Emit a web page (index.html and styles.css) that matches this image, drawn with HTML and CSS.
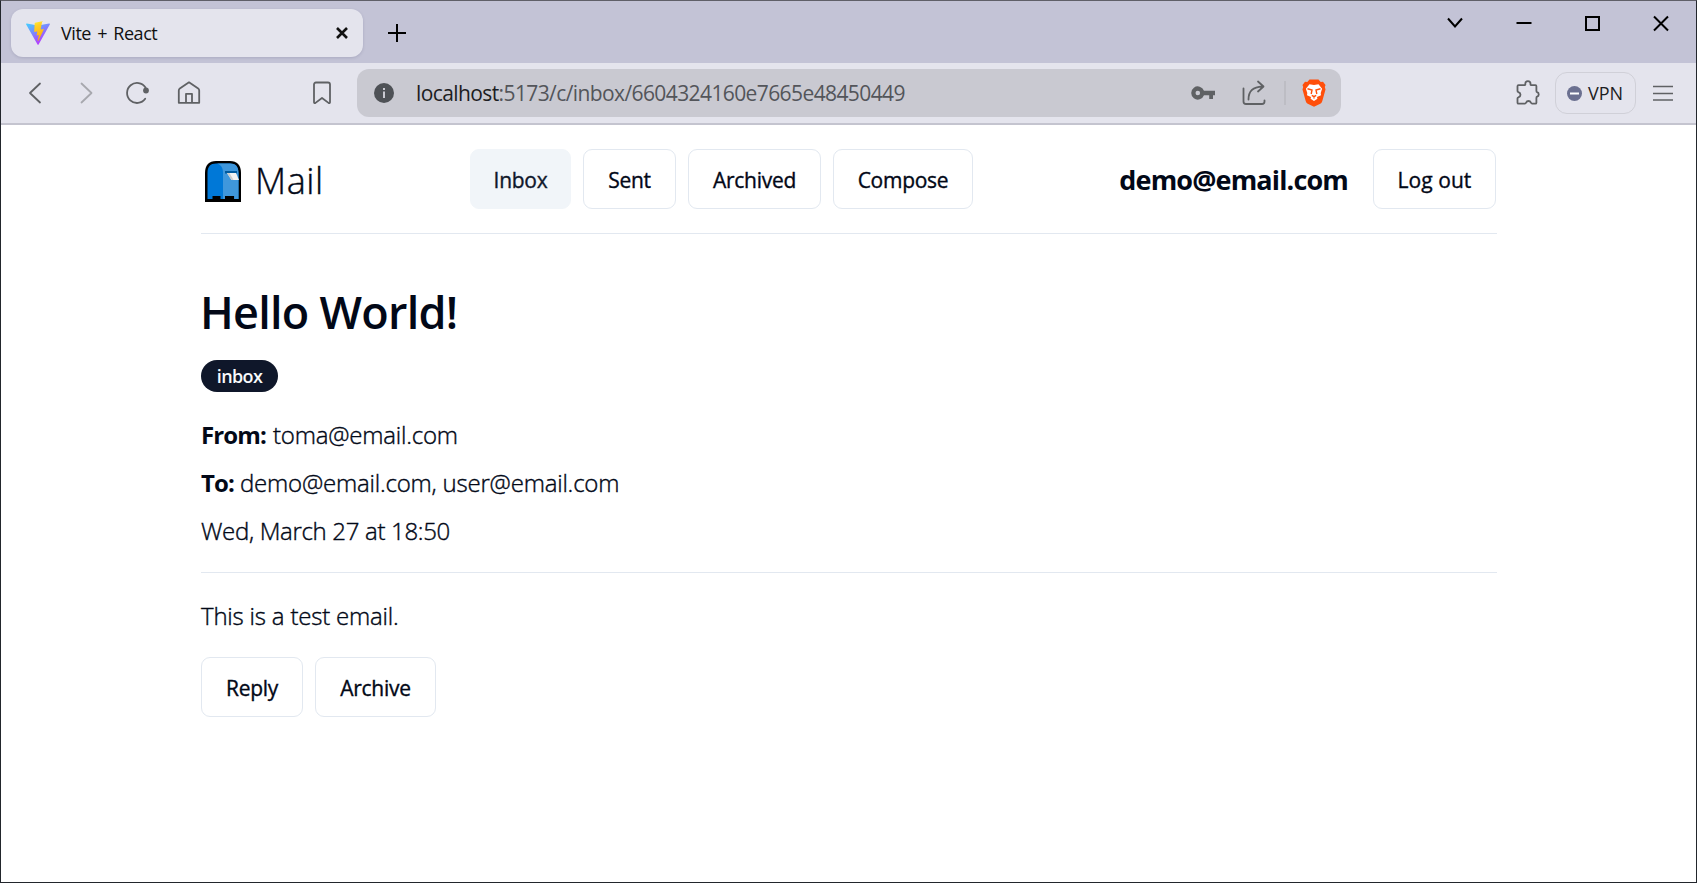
FILE: index.html
```
<!DOCTYPE html>
<html lang="en">
<head>
<meta charset="utf-8">
<title>Vite + React</title>
<link rel="stylesheet" href="styles.css">
</head>
<body>
<div class="window">
  <div class="tabstrip">
    <div class="tab">
      <svg class="favicon" width="24" height="24" viewBox="0 0 24 24">
        <defs>
          <linearGradient id="va" x1="0" y1="0" x2="0.6" y2="1"><stop offset="0" stop-color="#41d1ff"/><stop offset="1" stop-color="#bd34fe"/></linearGradient>
          <linearGradient id="vb" x1="0.4" y1="0" x2="0.6" y2="1"><stop offset="0" stop-color="#ffea2e"/><stop offset="0.2" stop-color="#ffd028"/><stop offset="1" stop-color="#ffa800"/></linearGradient>
        </defs>
        <path fill="url(#va)" d="M23.8 3.5 12.6 23.4a.6.6 0 0 1-1.1 0L.2 3.500a.6.6 0 0 1 .6-.9L12 4.600l11.100-2a.6.6 0 0 1 .7.900z"/>
        <path fill="url(#vb)" d="M17.300.1 9 1.700a.3.3 0 0 0-.3.300L8.200 10.600c0 .2.200.4.400.3l2.300-.5c.2 0 .4.200.4.400l-.7 3.400c0 .2.200.4.400.3l1.400-.4c.200-.1.400.1.400.300L11.700 19.700c-.1.300.3.500.5.2L17.800 8.500c.1-.2-.1-.5-.4-.4l-2.400.4c-.200 0-.4-.2-.3-.4L16.200.4c.1-.2-.1-.4.300-.3z"/>
      </svg>
      <span class="tab-title">Vite + React</span>
      <svg width="14" height="14" viewBox="0 0 14 14"><path d="M2 2l10 10M12 2L2 12" stroke="#111" stroke-width="2.600" fill="none"/></svg>
    </div>
    <svg class="new-tab" width="20" height="20" viewBox="0 0 20 20"><path d="M10 1v18M1 10h18" stroke="#000" stroke-width="2" fill="none"/></svg>
    <div class="win-controls">
      <svg width="20" height="20" viewBox="0 0 20 20"><path d="M3 5.500l7 8 7-8" stroke="#000" stroke-width="2" fill="none"/></svg>
      <svg width="20" height="20" viewBox="0 0 20 20"><path d="M2.500 10h15" stroke="#000" stroke-width="2" fill="none"/></svg>
      <svg width="20" height="20" viewBox="0 0 20 20"><path d="M4 4h13v13H4z" stroke="#000" stroke-width="2" fill="none"/></svg>
      <svg width="20" height="20" viewBox="0 0 20 20"><path d="M3 3.500l14 14M17 3.500l-14 14" stroke="#000" stroke-width="2" fill="none"/></svg>
    </div>
  </div>

  <div class="toolbar">
    <div class="nav-icons">
      <svg width="24" height="24" viewBox="0 0 24 24" class="ic"><path d="M17 2.500L7 12l10 9.500"/></svg>
      <svg width="24" height="24" viewBox="0 0 24 24" class="ic faded"><path d="M7.500 2.500L17.500 12 7.500 21.500"/></svg>
      <svg width="24" height="24" viewBox="0 0 24 24" class="ic"><path d="M20.200 17.800A10 10 0 1 1 20.500 6.600"/><circle cx="21" cy="9.500" r="2.900" fill="#5f6164" stroke="none"/></svg>
      <svg width="24" height="24" viewBox="0 0 24 24" class="ic home"><path d="M1.800 9.500c0-1 .3-1.500 1-2L12 1.300l9.200 6.200c.7.500 1 1 1 2v12.300H1.800zM9 21.500v-8.700h6v8.700"/></svg>
    </div>
    <svg width="24" height="24" viewBox="0 0 24 24" class="ic bookmark"><path d="M4 3.500c0-1.300.7-2 2-2h12c1.300 0 2 .7 2 2v17.700c0 1-.8 1.300-1.500.7L12 17l-6.500 4.900c-.7.600-1.500.3-1.500-.7z"/></svg>
    <div class="urlbar">
      <svg width="20" height="20" viewBox="0 0 20 20"><circle cx="10" cy="10" r="10" fill="#4e5156"/><path d="M10 5v2M10 8.500V15" stroke="#c9c9d1" stroke-width="2"/></svg>
      <span class="url"><b>localhost</b>:5173/c/inbox/6604324160e7665e48450449</span>
      <svg width="24" height="14" viewBox="0 0 24 14"><path fill="#5f6164" fill-rule="evenodd" d="M13 4.700A6.600 6.600 0 1 0 13 9.300h5.200v3.700h3.800V9.300h2V4.700zM6.800 4.700a2.300 2.300 0 1 1 0 4.600 2.300 2.300 0 0 1 0-4.600z"/></svg>
      <svg class="ic share" width="26" height="26" viewBox="0 0 26 26"><path d="M2.500 8.500v13c0 1.700.8 2.500 2.500 2.500h16c1.700 0 2.500-.8 2.500-2.500v-1.200M7.500 19.500c0-8.500 4-12.500 14-13M17 1.500l5.500 5-5.500 5"/></svg>
      <span class="sep"></span>
      <svg width="24" height="28" viewBox="0 0 24 28">
        <path fill="#ff4f0a" d="M7.500.5h9l2.200 2.500 2.300-.3 2.500 3.200-.7 2.100.7 2.500-3.200 11.500c-.5 1.500-1 2-2 2.700L12 27.800l-6.300-3.100c-1-.7-1.500-1.200-2-2.700L.5 10.500 1.200 8 .5 5.900 3 2.700l2.300.3z"/>
        <path fill="#fff" d="M7.500 5.200l4.500.8 4.500-.8 3.600 4.600-1.400 4.300.3 2.200-4 1.600.4 1.800-3.400 2.300-3.400-2.300.4-1.800-4-1.600.3-2.200-1.400-4.300z"/>
        <path fill="none" stroke="#ff4f0a" stroke-width="1.400" d="M5.500 9.800l4.500 1.200-.8 4M18.500 9.800L14 11l.8 4M9.800 16.300L12 17.600l2.200-1.300M12 17.500v2"/>
      </svg>
    </div>
    <div class="tools">
      <svg width="24" height="26" viewBox="0 0 24 26" class="ic"><path d="M2.500 5.200h6.200c.8 0 .6-1 .6-1.500a2.600 2.600 0 0 1 5.200 0c0 .5-.2 1.500.6 1.500h4.300c.7 0 1 .4 1 1v4.600c0 .8 0 1.100.7 1.400a2.300 2.300 0 0 1 0 4.400c-.7.300-.7.700-.7 1.400v4.700c0 .7-.3 1-1 1h-3.300c-.8 0-.9-.4-1.200-1.100a2.600 2.600 0 0 0-4.800 0c-.3.700-.4 1.100-1.200 1.100H2.500c-.7 0-1-.3-1-1v-4.400c0-.6.300-.8.900-1 2.800-.9 2.800-4.300 0-5.200-.6-.2-.9-.4-.9-1V6.200c0-.6.300-1 1-1z"/></svg>
      <div class="vpn">
        <svg width="15" height="15" viewBox="0 0 15 15"><circle cx="7.500" cy="7.500" r="7.500" fill="#6b7090"/><path d="M3 7.500h9" stroke="#fff" stroke-width="2"/></svg>
        <span>VPN</span>
      </div>
      <svg width="20" height="16" viewBox="0 0 20 16"><path d="M0 1.500h20M0 8.500h20M0 15h20" stroke="#5f6164" stroke-width="1.600"/></svg>
    </div>
  </div>

  <main class="page">
    <header class="header">
      <div class="brand">
        <svg width="36" height="41" viewBox="0 0 36 41">
          <path d="M0 41V12C0 4 4 0 11 0h14c7 0 11 4 11 12v29z" fill="#000"/>
          <path d="M2.500 38V12C2.500 5.500 5.500 2.500 11 2.500h14c5.500 0 8.500 3 8.500 9.500v26h-4.300v-3H20v3h-4.500v-3H7.500v3z" fill="#0078d7"/>
          <path d="M12 2.500h13c5.500 0 8.500 3 8.500 9.500v26h-4.300v-3H20v3h-2V12c0-5-2-8.500-6-9.500z" fill="#3f97dc"/>
          <path d="M20 10h12v2.500H20z" fill="#005a9e"/>
          <path d="M22 12h9l3 7h-7.500z" fill="#f2f2f2"/><path d="M22 12h2.500l4 7h-2z" fill="#ccc"/>
        </svg>
        <span>Mail</span>
      </div>
      <nav class="menu">
        <a class="btn active inbox">Inbox</a>
        <a class="btn sent">Sent</a>
        <a class="btn archived">Archived</a>
        <a class="btn compose">Compose</a>
      </nav>
      <div class="account">
        <strong>demo@email.com</strong>
        <a class="btn logout">Log out</a>
      </div>
    </header>
    <article class="mail">
      <h1>Hello World!</h1>
      <span class="badge">inbox</span>
      <div class="meta">
        <p><b class="from">From:</b><span>toma@email.com</span></p>
        <p><b class="to">To:</b><span>demo@email.com, user@email.com</span></p>
        <p class="date">Wed, March 27 at 18:50</p>
      </div>
      <p class="body">This is a test email.</p>
      <div class="actions">
        <a class="btn reply">Reply</a>
        <a class="btn archive">Archive</a>
      </div>
    </article>
  </main>
</div>
</body>
</html>
```
FILE: styles.css
```
* { box-sizing: border-box; }
body { margin: 0; font-family: "Open Sans", "Noto Sans", sans-serif; color: #020817; }
svg { display: block; flex: none; }
p, h1 { margin: 0; white-space: nowrap; }

.window { height: 883px; border: 1px solid #22262c; border-top-color: #5f5f68; background: #fff; overflow: hidden; }

.tabstrip { height: 62px; background: #c3c3d6; display: flex; align-items: flex-start; padding: 8px 25px 0 10px; }
.tab { width: 352px; height: 48px; background: #e4e4ed; border-radius: 12px; box-shadow: 0 1px 3px rgba(60, 60, 100, .18); display: flex; align-items: center; padding: 0 14px 0 15px; }
.tab-title { flex: 1; margin-left: 11px; padding-bottom: 1px; font-size: 18px; font-weight: 400; letter-spacing: -.45px; word-spacing: 2px; line-height: 24px; color: #111; }
.new-tab { margin: 14px 0 0 24px; }
.win-controls { margin: 4px 0 0 auto; display: flex; gap: 48.700px; }

.toolbar { height: 62px; background: #e4e4ed; border-bottom: 2px solid #c4c4cf; display: flex; align-items: center; padding-left: 22px; padding-right: 23px; }
.ic { fill: none; stroke: #5f6164; stroke-width: 1.800; stroke-linecap: round; stroke-linejoin: round; }
.faded { stroke: #a7a8ae; }
.nav-icons { display: flex; gap: 27px; }
.home { margin-left: 1px; }
.bookmark { margin-left: 109px; }
.urlbar { margin-left: 23px; width: 984px; height: 48px; background: #c9c9d1; border-radius: 12px; display: flex; align-items: center; padding: 0 15px 0 17px; }
.url { flex: 1; margin-left: 22px; font-size: 21px; line-height: 28px; letter-spacing: -.6px; color: #53555a; white-space: nowrap; }
.url b { font-weight: 400; color: #1c1d22; }
.share { margin-left: 26px; }
.sep { width: 2px; height: 24px; background: #bdbdc4; margin: 0 16px 0 17px; }
.tools { margin-left: auto; display: flex; align-items: center; }
.vpn { margin: 0 17px 0 15px; width: 81px; height: 42px; border: 1px solid #d0d0d8; border-radius: 12px; display: flex; align-items: center; gap: 6px; padding-left: 11px; font-size: 18px; line-height: 24px; color: #1c1d22; }
.vpn span { padding-bottom: 1px; }

.page { width: 1296px; margin-left: 200px; }
.header { height: 109px; border-bottom: 1px solid #e2e8f0; display: grid; grid-template-columns: 269px 1fr auto; align-items: center; }
.brand { display: flex; align-items: center; padding: 4px 0 0 4px; font-size: 36px; font-weight: 300; line-height: 48px; letter-spacing: .6px; }
.brand span { margin-left: 14px; -webkit-text-stroke: .4px currentColor; }
.menu, .actions { display: flex; gap: 12px; }
.btn { height: 60px; border: 1px solid #e2e8f0; border-radius: 9px; display: flex; align-items: center; justify-content: center; padding-top: 2px; font-size: 21px; font-weight: 500; line-height: 30px; letter-spacing: -.27px; white-space: nowrap; -webkit-text-stroke: .35px currentColor; }
.active { background: #f1f5f9; border-color: #f1f5f9; color: #0f172a; }
.inbox { width: 101px; }
.sent { width: 93px; }
.archived { width: 133px; }
.compose { width: 140px; }
.account { display: flex; align-items: center; gap: 25px; padding-right: 1px; }
.account strong { padding-top: 2px; font-size: 27px; font-weight: 700; line-height: 42px; letter-spacing: -.85px; }
.logout { width: 123px; letter-spacing: .05px; }

.mail { padding-top: 51px; display: flex; flex-direction: column; align-items: flex-start; }
h1 { font-size: 45px; font-weight: 600; line-height: 54px; letter-spacing: -.75px; margin-left: -1px; }
.badge { margin-top: 21px; width: 77px; height: 32px; border-radius: 16px; background: #0f172a; color: #f8fafc; font-size: 18px; font-weight: 600; line-height: 33px; letter-spacing: -.6px; text-align: center; }
.meta { width: 100%; height: 181px; padding-top: 24px; border-bottom: 1px solid #e2e8f0; display: flex; flex-direction: column; gap: 12px; }
.meta p, .body { height: 36px; display: flex; font-size: 24px; font-weight: 300; line-height: 37px; letter-spacing: -.2px; -webkit-text-stroke: .4px currentColor; }
.meta b { font-weight: 700; letter-spacing: -.87px; -webkit-text-stroke: 0; }
.from { width: 72px; }
.to { width: 39px; }
.meta .date { letter-spacing: -.32px; }
.body { margin-top: 24px; }
.actions { margin-top: 24px; }
.reply { width: 102px; }
.archive { width: 121px; }
```
